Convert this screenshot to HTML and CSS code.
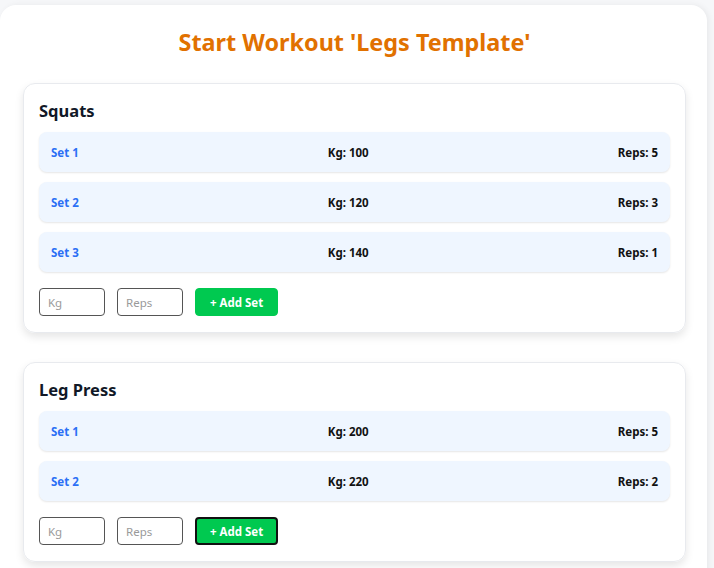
FILE: index.html
```html
<!DOCTYPE html>
<html>
<head>
<meta charset="utf-8">
<link rel="stylesheet" href="styles.css">
</head>
<body>
<div class="page">
  <h1 class="title">Start Workout 'Legs Template'</h1>
  <section class="card">
    <h2 class="ex-name">Squats</h2>
    <div class="sets">
      <div class="set"><span class="set-no">Set 1</span><span>Kg: 100</span><span>Reps: 5</span></div>
      <div class="set"><span class="set-no">Set 2</span><span>Kg: 120</span><span>Reps: 3</span></div>
      <div class="set"><span class="set-no">Set 3</span><span>Kg: 140</span><span>Reps: 1</span></div>
    </div>
    <div class="add-row">
      <input class="field" placeholder="Kg">
      <input class="field" placeholder="Reps">
      <button class="add-btn">+ Add Set</button>
    </div>
  </section>
  <section class="card">
    <h2 class="ex-name">Leg Press</h2>
    <div class="sets">
      <div class="set"><span class="set-no">Set 1</span><span>Kg: 200</span><span>Reps: 5</span></div>
      <div class="set"><span class="set-no">Set 2</span><span>Kg: 220</span><span>Reps: 2</span></div>
    </div>
    <div class="add-row">
      <input class="field" placeholder="Kg">
      <input class="field" placeholder="Reps">
      <button class="add-btn focused">+ Add Set</button>
    </div>
  </section>
</div>
</body>
</html>
```
FILE: styles.css
```css
html, body {
  margin: 0;
  padding: 0;
  background: #f6f7f9;
  font-family: "Noto Sans", "Open Sans", sans-serif;
  overflow: hidden;
}
.page {
  width: 707px;
  box-sizing: border-box;
  margin-top: 5px;
  background: #fff;
  border-radius: 16px;
  padding: 21px 21px 40px 23px;
  box-shadow: 2px 0 6px rgba(0,0,0,0.06);
  min-height: 600px;
}
.title {
  margin: 0 0 25px;
  text-align: center;
  font-size: 23.4px;
  line-height: 32px;
  font-weight: 700;
  color: #e17100;
}
.card {
  border: 1px solid #e8eaee;
  border-radius: 12px;
  padding: 15px 15px 16px;
  box-shadow: 0 4px 8px rgba(0,0,0,0.1);
  margin-bottom: 29px;
}
.ex-name {
  margin: 0 0 9px;
  font-size: 16.5px;
  line-height: 24px;
  font-weight: 700;
  color: #111827;
}
.sets {
  display: flex;
  flex-direction: column;
  gap: 10px;
}
.set {
  height: 40px;
  display: flex;
  align-items: center;
  justify-content: space-between;
  padding: 0 12px;
  background: #eff6ff;
  border-radius: 8px;
  box-shadow: 0 1px 2px rgba(0,0,0,0.1);
  font-size: 11.5px;
  font-weight: 700;
  color: #111;
}
.set-no {
  color: #2b6ff5;
}
.add-row {
  display: flex;
  gap: 12px;
  margin-top: 16px;
}
.field {
  width: 66px;
  height: 28px;
  box-sizing: border-box;
  border: 1.5px solid #555;
  border-radius: 4px;
  padding: 0 8px;
  font-family: inherit;
  font-size: 11.5px;
  outline: none;
}
.field::placeholder {
  color: #9a9a9a;
}
.add-btn {
  width: 83px;
  height: 28px;
  box-sizing: border-box;
  border: 1.5px solid #00c950;
  border-radius: 4px;
  background: #00c950;
  color: #fff;
  font-family: inherit;
  font-size: 11.5px;
  font-weight: 700;
}
.add-btn.focused {
  border: 2px solid #111;
}
```
